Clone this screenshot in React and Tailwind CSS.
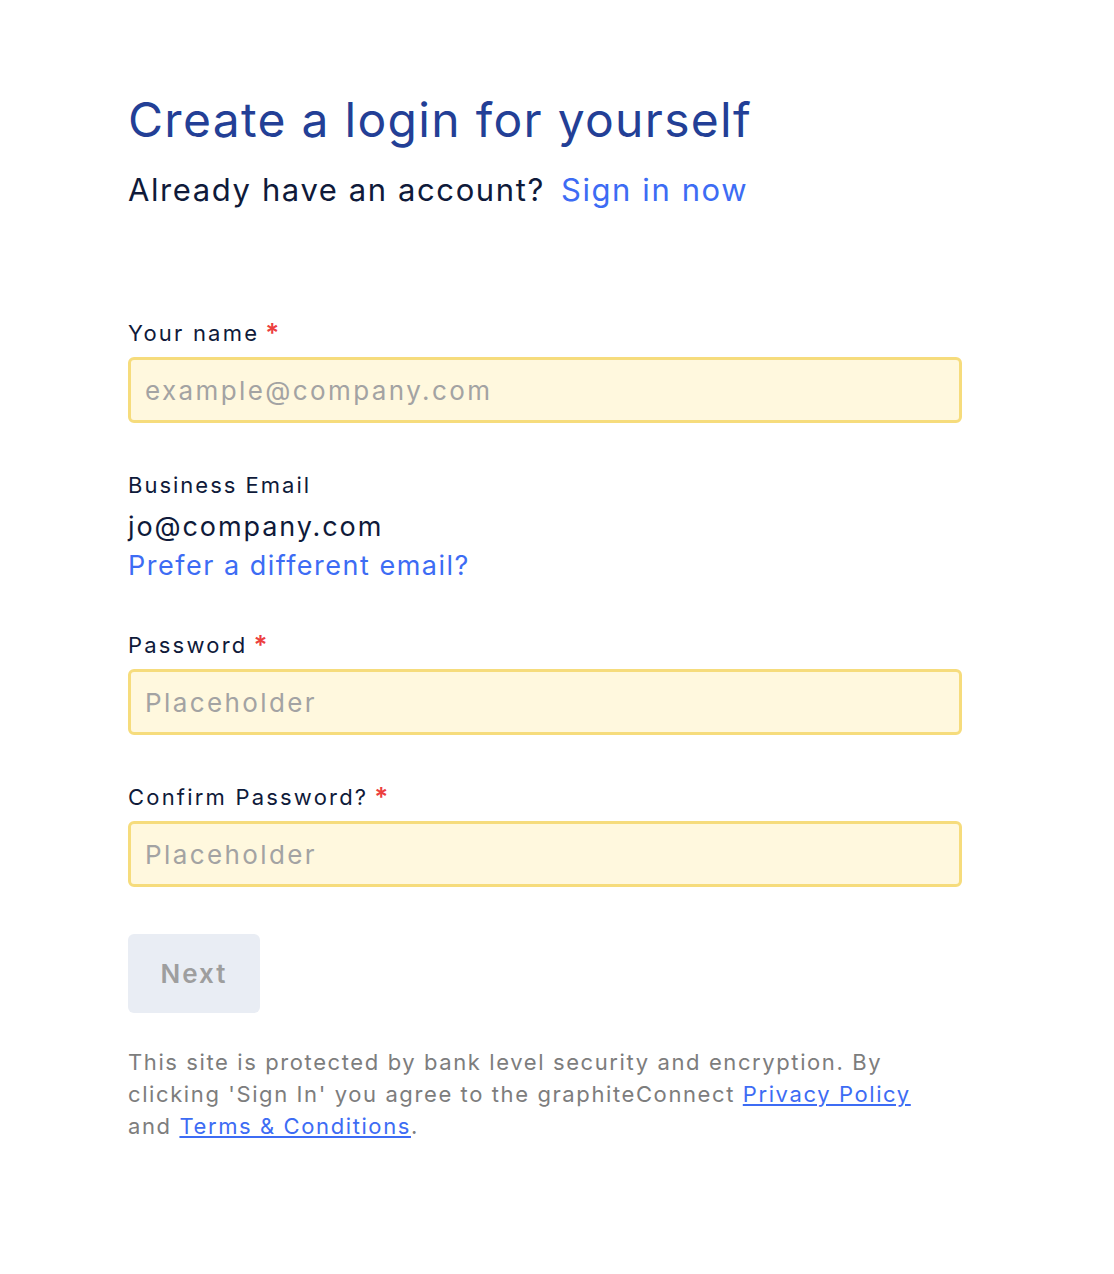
import React from 'react';

const Field = ({ label, placeholder }) => (
  <div>
    <label className="flex items-center text-[22px] leading-[30px] tracking-[2.2px] text-[#0f1a3a]">
      {label}
      <span className="ml-[6px] text-[26px] font-semibold text-[#ec3f3f]">*</span>
    </label>
    <input
      type="text"
      placeholder={placeholder}
      className="mt-[9px] block h-[66px] w-full rounded-[6px] border-[3px] border-[#f6dc7c] bg-[#fff8de] px-[14px] text-[26px] tracking-[2.4px] text-[#333] placeholder:text-[#a3a3a3] outline-none"
    />
  </div>
);

export default function App() {
  return (
    <div className="min-h-[1274px] bg-white font-['Inter','DejaVu_Sans',sans-serif]">
      <div className="w-[834px] ml-[128px] pt-[92px]">
        <h1 className="text-[48px] leading-[56px] tracking-[1.3px] text-[#233f96]">Create a login for yourself</h1>
        <p className="mt-[22px] text-[31px] leading-[40px] tracking-[1.6px] text-[#0f1a3a]">
          Already have an account?
          <a href="#" className="ml-[16px] text-[#3d6cf4]">Sign in now</a>
        </p>

        <div className="mt-[108px]">
          <Field label="Your name" placeholder="example@company.com" />
        </div>

        <div className="mt-[47px]">
          <div className="text-[22px] leading-[30px] tracking-[2px] text-[#0f1a3a]">Business Email</div>
          <div className="mt-[9px] text-[27px] leading-[36px] tracking-[1.9px] text-[#0f1a3a]">jo@company.com</div>
          <a href="#" className="mt-[3px] block text-[27px] leading-[36px] tracking-[1.5px] text-[#3d6cf4]">Prefer a different email?</a>
        </div>

        <div className="mt-[46px]">
          <Field label="Password" placeholder="Placeholder" />
        </div>

        <div className="mt-[47px]">
          <Field label="Confirm Password?" placeholder="Placeholder" />
        </div>

        <button className="mt-[47px] h-[79px] w-[132px] rounded-[6px] bg-[#e9edf4] text-[26px] font-semibold tracking-[2px] text-[#9e9e9e]">
          Next
        </button>

        <p className="mt-[33px] text-[22px] leading-[32px] tracking-[1.6px] text-[#7d7d7d]">
          This site is protected by bank level security and encryption. By
          <br />
          clicking 'Sign In' you agree to the graphiteConnect{' '}
          <a href="#" className="text-[#3d6cf4] underline">Privacy Policy</a>
          <br />
          and <a href="#" className="text-[#3d6cf4] underline">Terms &amp; Conditions</a>.
        </p>
      </div>
    </div>
  );
}
